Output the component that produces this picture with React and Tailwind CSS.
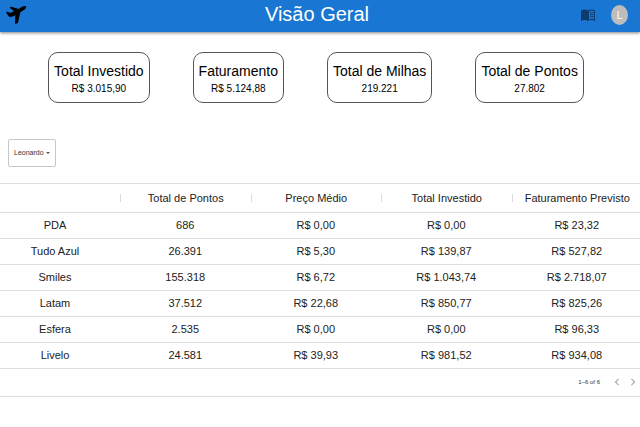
import React from "react";
import { MdChevronLeft, MdChevronRight } from "react-icons/md";

const cards = [
  { title: "Total Investido", value: "R$ 3.015,90" },
  { title: "Faturamento", value: "R$ 5.124,88" },
  { title: "Total de Milhas", value: "219.221" },
  { title: "Total de Pontos", value: "27.802" },
];

const columns = ["Total de Pontos", "Preço Médio", "Total Investido", "Faturamento Previsto"];

const rows = [
  ["PDA", "686", "R$ 0,00", "R$ 0,00", "R$ 23,32"],
  ["Tudo Azul", "26.391", "R$ 5,30", "R$ 139,87", "R$ 527,82"],
  ["Smiles", "155.318", "R$ 6,72", "R$ 1.043,74", "R$ 2.718,07"],
  ["Latam", "37.512", "R$ 22,68", "R$ 850,77", "R$ 825,26"],
  ["Esfera", "2.535", "R$ 0,00", "R$ 0,00", "R$ 96,33"],
  ["Livelo", "24.581", "R$ 39,93", "R$ 981,52", "R$ 934,08"],
];

function Plane() {
  return (
    <svg viewBox="0 0 60 54" className="h-[18px] w-5" fill="#000" aria-hidden="true">
      <path d="M0 18 L5 17 L13 21 L24 16 L13 7 L12 3 L17 2 L38 9 L47 3 Q54 -1 60 1 Q62 5 55 11 L43 19 L36 50 L29 54 L27 52 L28 28 L16 33 Q10 34 7 30 Z" />
    </svg>
  );
}

function Book() {
  return (
    <svg viewBox="0 0 28 26" className="h-[13px] w-3.5" aria-hidden="true">
      <path fill="#0f3c70" d="M0 3Q7-1 14 3Q21-1 28 3V24Q21 20 14 24Q7 20 0 24Z" />
      <path fill="#1976d2" d="M16 5Q20 2 26 4V20Q20 19 16 21Z" />
      <path fill="none" stroke="#0f3c70" strokeWidth="2" d="M18 8Q21 7 25 7M18 12Q21 11 25 11M18 16Q21 15 25 15" />
    </svg>
  );
}

function Header() {
  return (
    <header className="grid h-8 grid-cols-[1fr_auto_1fr] items-center bg-[#1976d2] pl-1.5 pr-3 shadow-[0_1px_3px_rgba(0,0,0,0.5)]">
      <a href="#inicio" aria-label="Início" className="justify-self-start pb-0.5">
        <Plane />
      </a>
      <h1 className="pb-1 text-xl leading-7 text-white">Visão Geral</h1>
      <div className="flex items-center gap-4 justify-self-end pb-0.5">
        <button type="button" aria-label="Guia">
          <Book />
        </button>
        <button
          type="button"
          aria-label="Conta"
          className="flex h-5 w-[17px] items-center justify-center rounded-[50%] bg-[#bdbdbd] text-[10px] text-white"
        >
          L
        </button>
      </div>
    </header>
  );
}

function Summary() {
  return (
    <section className="flex flex-wrap justify-center gap-[43px] pr-2 pt-5">
      {cards.map((card) => (
        <article
          key={card.title}
          className="flex h-[51px] flex-col items-center rounded-[10px] border border-[#555] px-[5px] pt-2 text-black"
        >
          <h2 className="text-sm leading-5">{card.title}</h2>
          <p className="text-[10px] leading-4">{card.value}</p>
        </article>
      ))}
    </section>
  );
}

function OwnerSelect() {
  return (
    <div className="ml-2 mt-9 grid w-12 items-center">
      <select
        aria-label="Titular"
        className="col-start-1 row-start-1 h-7 w-full appearance-none rounded-xs border border-[#c8c8c8] bg-white pl-[5px] text-[7px] text-[#333]"
        defaultValue="Leonardo"
      >
        <option>Leonardo</option>
      </select>
      <svg viewBox="0 0 4 2" className="pointer-events-none col-start-1 row-start-1 mr-1.5 h-0.5 w-1 justify-self-end" fill="#555" aria-hidden="true">
        <path d="M0 0h4L2 2z" />
      </svg>
    </div>
  );
}

function Programs() {
  return (
    <section className="mt-4 overflow-hidden border-y border-[#e0e0e0]">
      <table className="w-[calc(100%+2px)] table-fixed border-collapse text-[11px] leading-4 text-[#222]">
        <thead>
          <tr className="h-7 border-b border-[#e0e0e0]">
            <td className="w-[120px]" />
            {columns.map((name) => (
              <th key={name} scope="col" className="p-0 font-normal">
                <div className="flex items-center">
                  <span className="h-2 w-px bg-[#dcdcdc]" />
                  <span className="flex-1 whitespace-nowrap text-center">{name}</span>
                </div>
              </th>
            ))}
          </tr>
        </thead>
        <tbody>
          {rows.map(([name, ...values]) => (
            <tr key={name} className="h-[26px] border-b border-[#e0e0e0]">
              <th scope="row" className="p-0 pr-2.5 text-center font-normal">
                {name}
              </th>
              {values.map((value, i) => (
                <td key={i} className="p-0 text-center">
                  {value}
                </td>
              ))}
            </tr>
          ))}
        </tbody>
      </table>
      <footer className="flex h-[27px] items-center justify-end text-[#333]">
        <span className="pr-2.5 text-[6px]">1–6 of 6</span>
        <button type="button" aria-label="Página anterior" disabled className="text-[#aaa]">
          <MdChevronLeft className="h-3.5 w-3.5" />
        </button>
        <button type="button" aria-label="Próxima página" disabled className="ml-0.5 text-[#aaa]">
          <MdChevronRight className="h-3.5 w-3.5" />
        </button>
      </footer>
    </section>
  );
}

export default function App() {
  return (
    <div className="min-h-screen bg-white font-['Liberation_Sans',Arial,sans-serif]">
      <Header />
      <main>
        <Summary />
        <OwnerSelect />
        <Programs />
      </main>
    </div>
  );
}
